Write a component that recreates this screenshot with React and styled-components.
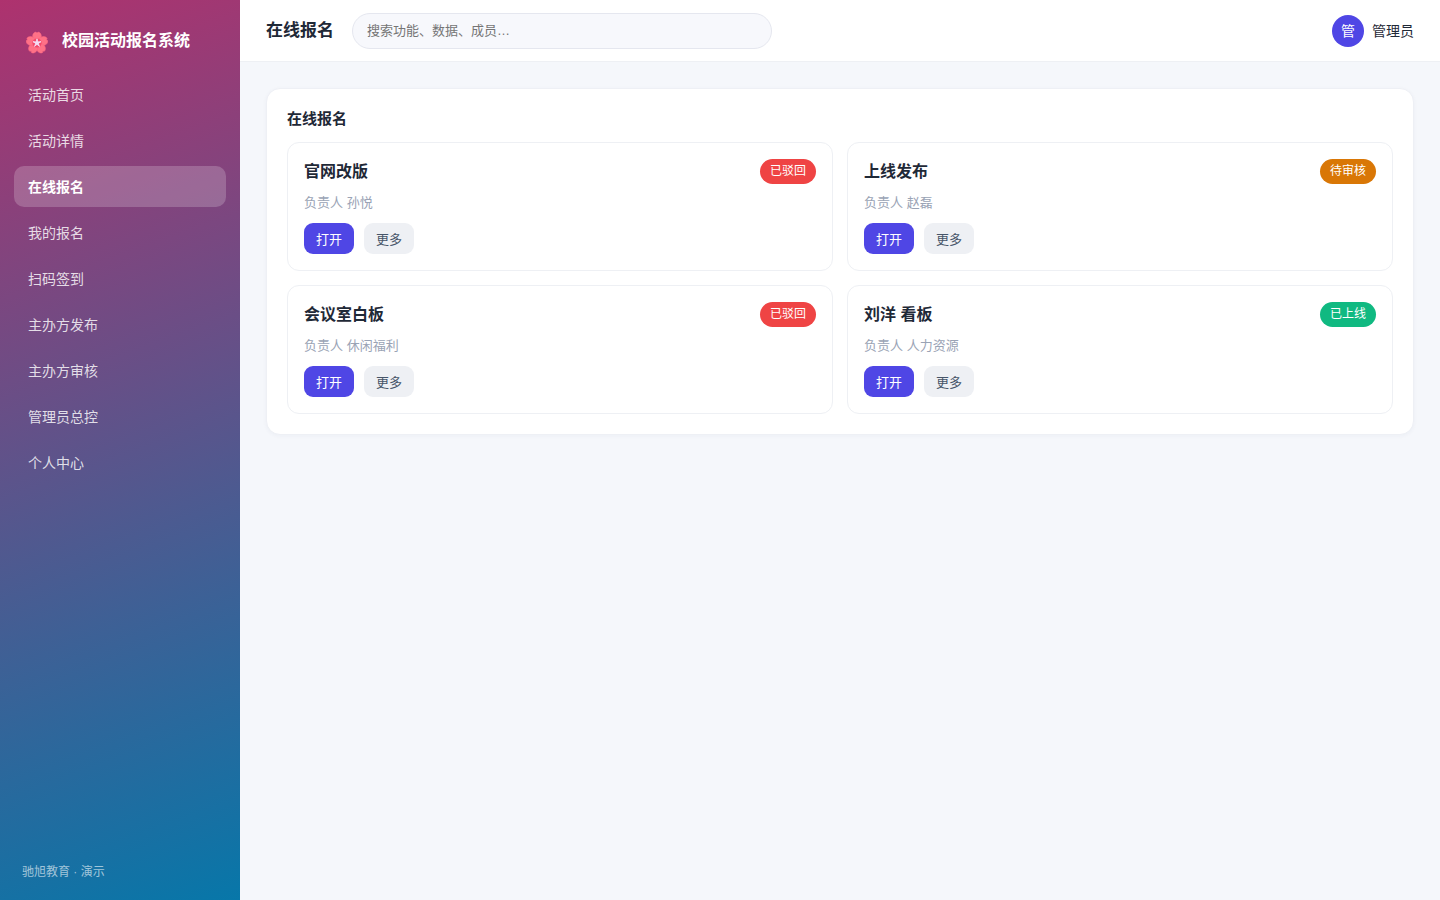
import styled, { createGlobalStyle } from "styled-components";

const GlobalStyle = createGlobalStyle`
  * {
    box-sizing: border-box;
  }

  body {
    margin: 0;
    background: #f5f7fb;
    color: #1f2937;
    font-family: "Liberation Sans", "Noto Sans CJK SC", sans-serif;
    font-size: 14px;
    line-height: 20px;
  }

  button,
  input {
    font-family: inherit;
  }
`;

const Layout = styled.div`
  display: flex;
  min-height: 100vh;
`;

const Sidebar = styled.aside`
  display: flex;
  flex-direction: column;
  flex: 0 0 240px;
  padding: 22px 14px 18px;
  background: linear-gradient(160deg, #ae326e, #0777a9);
  color: #fff;
`;

const Brand = styled.div`
  display: flex;
  align-items: center;
  gap: 14px;
  height: 38px;
  margin-bottom: 14px;
  padding: 0 12px;
  font-size: 16px;
  font-weight: 700;
`;

const Nav = styled.nav`
  display: flex;
  flex-direction: column;
  gap: 5px;
`;

const NavLink = styled.a`
  padding: 11px 14px 10px;
  border-radius: 10px;
  background: ${({ $active }) =>
    $active ? "rgba(255, 255, 255, 0.2)" : "transparent"};
  color: ${({ $active }) => ($active ? "#fff" : "rgba(255, 255, 255, 0.82)")};
  font-weight: ${({ $active }) => ($active ? 700 : 400)};
  text-decoration: none;
`;

const SidebarFooter = styled.footer`
  margin-top: auto;
  padding: 0 8px;
  color: rgba(255, 255, 255, 0.6);
  font-size: 12px;
`;

const Content = styled.div`
  flex: 1;
  min-width: 0;
`;

const Topbar = styled.header`
  display: flex;
  align-items: center;
  gap: 18px;
  height: 62px;
  padding: 0 26px;
  border-bottom: 1px solid #eef0f4;
  background: #fff;
`;

const PageTitle = styled.h1`
  margin: 0;
  font-size: 17px;
  line-height: 23px;
`;

const Search = styled.input`
  width: 420px;
  height: 36px;
  padding: 0 14px;
  border: 1px solid #e5e7ef;
  border-radius: 18px;
  background: #f7f8fc;
  color: inherit;
  font-size: 13px;

  &::placeholder {
    color: #757575;
  }
`;

const User = styled.div`
  display: flex;
  align-items: center;
  gap: 8px;
  margin-left: auto;
`;

const Avatar = styled.span`
  width: 32px;
  border-radius: 50%;
  background: #4f46e5;
  color: #fff;
  line-height: 32px;
  text-align: center;
`;

const Main = styled.main`
  padding: 26px;
`;

const Panel = styled.section`
  padding: 20px;
  border: 1px solid #eef0f5;
  border-radius: 14px;
  background: #fff;
  box-shadow: 0 1px 4px rgba(30, 40, 90, 0.04);
`;

const PanelTitle = styled.h2`
  margin: 0 0 13px;
  font-size: 15px;
  line-height: 20px;
`;

const Grid = styled.div`
  display: grid;
  grid-template-columns: repeat(2, 1fr);
  gap: 14px;
`;

const Card = styled.article`
  padding: 16px;
  border: 1px solid #eef0f4;
  border-radius: 12px;
`;

const CardHead = styled.div`
  display: flex;
  align-items: center;
  justify-content: space-between;
`;

const CardTitle = styled.h3`
  margin: 0;
  font-size: 16px;
  line-height: 25px;
`;

const badgeColors = {
  rejected: "#ef4444",
  pending: "#d97706",
  online: "#10b981"
};

const Badge = styled.span`
  padding: 0 10px;
  border-radius: 13px;
  background: ${({ $status }) => badgeColors[$status]};
  color: #fff;
  font-size: 12px;
  line-height: 25px;
`;

const Owner = styled.p`
  margin: 9px 0 10px;
  color: #9aa3b5;
  font-size: 13px;
`;

const Actions = styled.div`
  display: flex;
  gap: 10px;
`;

const Button = styled.button`
  height: 31px;
  padding: 0 12px;
  border: 0;
  border-radius: 9px;
  background: ${({ $primary }) => ($primary ? "#4f46e5" : "#eef0f4")};
  color: ${({ $primary }) => ($primary ? "#fff" : "#475569")};
  font-size: 13px;
  cursor: pointer;
`;

const petals = [0, 72, 144, 216, 288];

function BlossomIcon() {
  return (
    <svg width="22" height="26" viewBox="0 0 22 26" aria-hidden="true">
      {petals.map(angle => (
        <path
          key={angle}
          d="M11 15.5C8 13.4 6.4 10.6 6.6 8C6.8 5.6 8.4 4 10 4L11 5L12 4C13.6 4 15.2 5.6 15.4 8C15.6 10.6 14 13.4 11 15.5Z"
          fill="#ff7187"
          stroke="#fb6580"
          strokeWidth="0.5"
          transform={`rotate(${angle} 11 15)`}
        />
      ))}
      <circle cx="11" cy="15" r="4.6" fill="#f2496b" />
      {petals.map(angle => (
        <path
          key={angle}
          d="M10 15L11 10.8L12 15Z"
          fill="#f5dcf5"
          stroke="#f5dcf5"
          strokeWidth="0.8"
          transform={`rotate(${angle} 11 15)`}
        />
      ))}
    </svg>
  );
}

const navItems = [
  "活动首页",
  "活动详情",
  "在线报名",
  "我的报名",
  "扫码签到",
  "主办方发布",
  "主办方审核",
  "管理员总控",
  "个人中心"
];

const cards = [
  { title: "官网改版", owner: "孙悦", status: "rejected", label: "已驳回" },
  { title: "上线发布", owner: "赵磊", status: "pending", label: "待审核" },
  { title: "会议室白板", owner: "休闲福利", status: "rejected", label: "已驳回" },
  { title: "刘洋 看板", owner: "人力资源", status: "online", label: "已上线" }
];

export default function App() {
  const current = "在线报名";

  return (
    <>
      <GlobalStyle />
      <Layout>
        <Sidebar>
          <Brand>
            <BlossomIcon />
            <span>校园活动报名系统</span>
          </Brand>
          <Nav>
            {navItems.map(item => (
              <NavLink key={item} href="#" $active={item === current}>
                {item}
              </NavLink>
            ))}
          </Nav>
          <SidebarFooter>驰旭教育 · 演示</SidebarFooter>
        </Sidebar>
        <Content>
          <Topbar>
            <PageTitle>{current}</PageTitle>
            <Search
              type="search"
              aria-label="搜索"
              placeholder="搜索功能、数据、成员…"
            />
            <User>
              <Avatar>管</Avatar>
              <span>管理员</span>
            </User>
          </Topbar>
          <Main>
            <Panel>
              <PanelTitle>{current}</PanelTitle>
              <Grid>
                {cards.map(({ title, owner, status, label }) => (
                  <Card key={title}>
                    <CardHead>
                      <CardTitle>{title}</CardTitle>
                      <Badge $status={status}>{label}</Badge>
                    </CardHead>
                    <Owner>负责人 {owner}</Owner>
                    <Actions>
                      <Button type="button" $primary>
                        打开
                      </Button>
                      <Button type="button">更多</Button>
                    </Actions>
                  </Card>
                ))}
              </Grid>
            </Panel>
          </Main>
        </Content>
      </Layout>
    </>
  );
}
